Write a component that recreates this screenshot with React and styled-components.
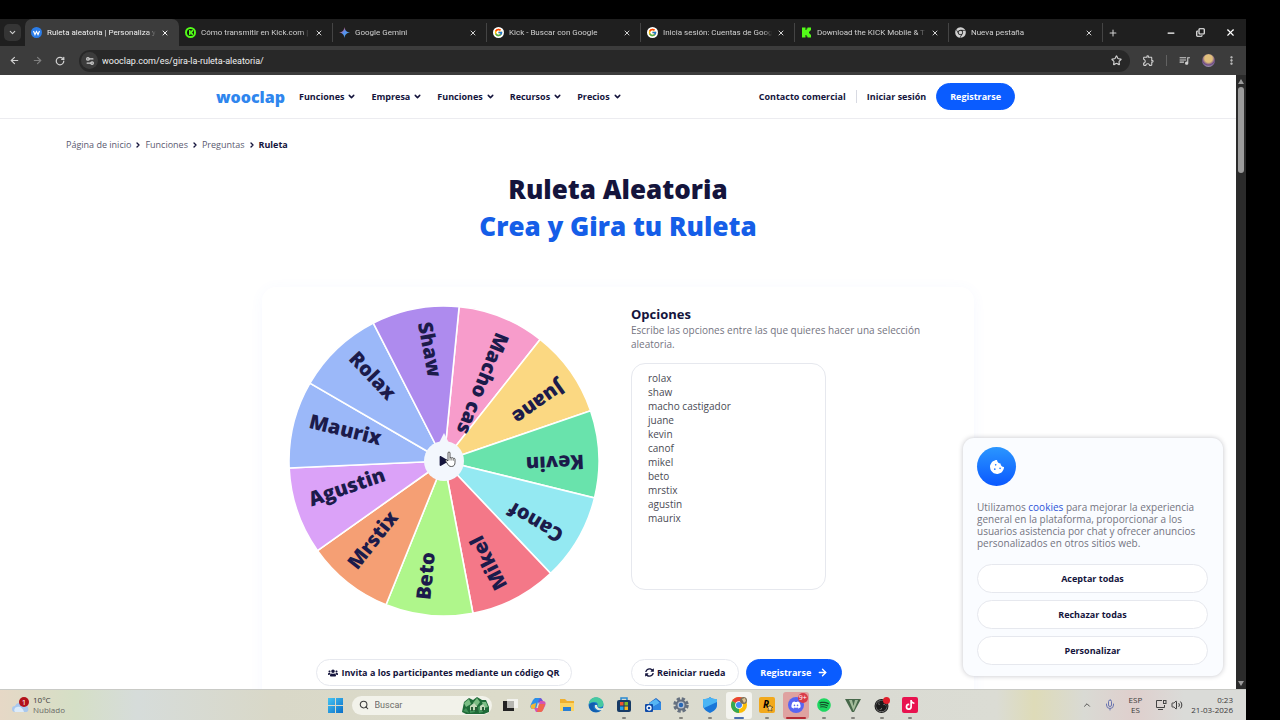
import React, { useState } from "react";
import styled, { createGlobalStyle, css } from "styled-components";
import {
  ArrowLeft,
  ArrowRight,
  ChevronDown,
  ChevronRight,
  ChevronUp,
  Copy,
  EllipsisVertical,
  Mic,
  Minus,
  Plus,
  RotateCw,
  Search,
  Settings2,
  Star,
  Volume2,
  X
} from "lucide-react";
import {
  FaChrome,
  FaCookieBite,
  FaDiscord,
  FaPlay,
  FaSpotify,
  FaSyncAlt,
  FaTiktok,
  FaUsers
} from "react-icons/fa";
import { FcGoogle } from "react-icons/fc";
import { MdOutlineExtension, MdQueueMusic } from "react-icons/md";
import { SiObsstudio } from "react-icons/si";

const NAVY = "#14143c";
const BLUE = "#0a5cff";
const LINE = "#e6e8ee";

const GlobalStyle = createGlobalStyle`
  * {
    box-sizing: border-box;
  }
  body {
    margin: 0;
    background: #000;
    font-family: "Open Sans", "Noto Sans", sans-serif;
  }
  button, input, textarea {
    font-family: inherit;
    margin: 0;
  }
  button {
    padding: 0;
    border: none;
    background: none;
    color: inherit;
    cursor: pointer;
  }
  a {
    color: inherit;
    text-decoration: none;
  }
  svg {
    display: block;
    flex-shrink: 0;
  }
`;

const Desktop = styled.div`
  height: 100vh;
  padding: 19px 34px 0 0;
  display: flex;
  flex-direction: column;
  background: #000;
`;

/* browser */

const TabStrip = styled.div`
  height: 27px;
  display: flex;
  align-items: center;
  background: #1f1f1f;
  color: #d0d0d0;
  font-family: Roboto, sans-serif;
`;

const TabSearch = styled.button`
  width: 17px;
  height: 17px;
  margin: 0 4px;
  display: grid;
  place-items: center;
  border-radius: 5px;
  background: #353535;
`;

const Tab = styled.div`
  flex: 0 1 154px;
  min-width: 0;
  height: 19px;
  padding: 0 9px 0 6px;
  display: flex;
  align-items: center;
  gap: 5px;
  border-right: 1px solid #444;

  ${props =>
    props.$active &&
    css`
      height: 27px;
      border-right-color: transparent;
      border-radius: 7px 7px 0 0;
      background: #3c3c3c;
      color: #f0f0f0;
    `}
`;

const TabTitle = styled.span`
  flex: 1;
  overflow: hidden;
  white-space: nowrap;
  font-size: 8px;
  line-height: 12px;
  mask-image: linear-gradient(90deg, #000 92%, transparent);
`;

const NewTab = styled.button`
  margin-left: 5px;
`;

const WindowControls = styled.div`
  margin-left: auto;
  padding-right: 10px;
  display: flex;
  gap: 20px;
  color: #fff;
`;

const Toolbar = styled.div`
  height: 29px;
  padding: 0 9px;
  display: flex;
  align-items: center;
  background: #3c3c3c;
  color: #d0d0d0;
  font-family: Roboto, sans-serif;
`;

const NavButtons = styled.div`
  width: 70px;
  display: flex;
  gap: 12px;
`;

const ToolButton = styled.button`
  opacity: ${props => (props.$dim ? 0.45 : 1)};
`;

const AddressBar = styled.div`
  flex: 1;
  height: 22px;
  padding: 0 8px 0 2px;
  display: flex;
  align-items: center;
  gap: 4px;
  border-radius: 11px;
  background: #282828;
`;

const SiteInfo = styled.button`
  width: 17px;
  height: 17px;
  display: grid;
  place-items: center;
  border-radius: 50%;
  background: #3c3c3c;
`;

const Address = styled.input`
  flex: 1;
  padding: 0;
  border: none;
  outline: none;
  background: none;
  color: #f0f0f0;
  font-size: 9px;
`;

const ToolbarActions = styled.div`
  padding-left: 12px;
  display: flex;
  align-items: center;
  gap: 11px;
`;

const ToolbarDivider = styled.span`
  width: 1px;
  height: 11px;
  background: #626262;
`;

const Avatar = styled.span`
  width: 13px;
  height: 13px;
  border-radius: 50%;
  background: radial-gradient(circle at 50% 35%, #e0bf7c 35%, #6d4a86 60%, #a9a2b8 80%);
`;

const Viewport = styled.div`
  flex: 1;
  min-height: 0;
  display: flex;
`;

const Scrollbar = styled.div`
  width: 10px;
  padding: 4px 0 3px;
  display: flex;
  flex-direction: column;
  align-items: center;
  gap: 3px;
  background: #2b2b2b;
`;

const Thumb = styled.div`
  width: 6px;
  height: 86px;
  margin-bottom: auto;
  border-radius: 3px;
  background: #9c9c9c;
`;

/* page */

const Page = styled.div`
  position: relative;
  flex: 1;
  min-width: 0;
  overflow: hidden;
  background: #fff;
  color: ${NAVY};
`;

const Header = styled.header`
  height: 44px;
  border-bottom: 1px solid #ececf0;
`;

const HeaderInner = styled.div`
  max-width: 804px;
  height: 100%;
  margin: 0 auto;
  padding-right: 5px;
  display: flex;
  align-items: center;
  font-size: 9px;
  font-weight: 700;
`;

const Logo = styled.a`
  width: 83px;
  color: #2f86ee;
  font-size: 16px;
  line-height: 20px;
  font-weight: 800;
`;

const Menu = styled.nav`
  display: flex;
  gap: 15px;
`;

const MenuButton = styled.button`
  display: flex;
  align-items: center;
  gap: 3px;
  font-size: 9px;
  font-weight: 700;
`;

const Account = styled.div`
  margin-left: auto;
  display: flex;
  align-items: center;
`;

const AccountLink = styled.a`
  padding: 0 10px;

  & + & {
    border-left: 1px solid #d8dae2;
  }
`;

const Pill = styled.button`
  height: 27px;
  padding: 0 ${props => (props.$tight ? 11 : 13)}px;
  display: flex;
  align-items: center;
  justify-content: center;
  gap: ${props => (props.$primary ? 6 : 3)}px;
  border: 1px solid ${props => (props.$primary ? BLUE : LINE)};
  border-radius: 14px;
  background: ${props => (props.$primary ? BLUE : "#fff")};
  color: ${props => (props.$primary ? "#fff" : NAVY)};
  font-size: 9px;
  font-weight: 700;
  white-space: nowrap;
`;

const Breadcrumb = styled.nav`
  max-width: 1104px;
  margin: 0 auto;
  padding-top: 18px;
  display: flex;
  align-items: center;
  gap: 3px;
  color: #5a5a70;
  font-size: 9px;
  line-height: 16px;
`;

const Current = styled.span`
  color: ${NAVY};
  font-weight: 700;
`;

const Title = styled.h1`
  margin: 18px 0 0;
  font-size: 26px;
  line-height: 37px;
  font-weight: 800;
  text-align: center;

  span {
    display: block;
    color: #155ee8;
  }
`;

const Card = styled.main`
  max-width: 712px;
  margin: 42px auto 0;
  padding: 19px 27px 40px;
  display: grid;
  grid-template-columns: 310px 1fr;
  gap: 43px 32px;
  border-radius: 14px;
  background: #fff;
  box-shadow: 0 2px 14px rgba(70, 110, 255, 0.05);
`;

const WheelBox = styled.div`
  position: relative;
`;

const SpinButton = styled.button`
  position: absolute;
  top: 50%;
  left: 50%;
  width: 40px;
  height: 40px;
  display: grid;
  place-items: center;
  border-radius: 50%;
  background: #f3f7fd;
  transform: translate(-50%, -50%);

  &::before {
    content: "";
    position: absolute;
    bottom: 38px;
    border: 5px solid transparent;
    border-top: none;
    border-bottom: 10px solid #f3f7fd;
  }
`;

const Cursor = styled.svg`
  position: absolute;
  left: 156px;
  top: 145px;
  pointer-events: none;
`;

const Options = styled.section`
  display: flex;
  flex-direction: column;
  align-items: flex-start;
`;

const OptionsLabel = styled.label`
  font-size: 13px;
  line-height: 17px;
  font-weight: 700;
`;

const Hint = styled.p`
  margin: 0 0 12px;
  color: #74747f;
  font-size: 10px;
  line-height: 14px;
`;

const OptionsInput = styled.textarea`
  width: 195px;
  height: 227px;
  padding: 7px 16px;
  border: 1px solid ${LINE};
  border-radius: 14px;
  outline: none;
  resize: none;
  color: #4a4a54;
  font-size: 10px;
  line-height: 14px;
`;

const Actions = styled.div`
  display: flex;
  justify-content: ${props => (props.$center ? "center" : "flex-start")};
  gap: 7px;
`;

const CookiePanel = styled.aside`
  position: absolute;
  right: 13px;
  bottom: 13px;
  width: 260px;
  padding: 9px 15px 11px 14px;
  border-radius: 11px;
  background: #fafcff;
  box-shadow: 0 0 5px rgba(20, 20, 40, 0.25);
`;

const CookieBadge = styled.div`
  width: 39px;
  height: 39px;
  display: grid;
  place-items: center;
  border-radius: 50%;
  background: linear-gradient(#2a96ff, #0a58ff);
  color: #fff;
`;

const CookieText = styled.p`
  margin: 15px 0;
  color: #74747f;
  font-size: 10px;
  line-height: 12px;

  a {
    color: #2d52d8;
  }
`;

const CookieActions = styled.div`
  display: grid;
  gap: 7px;

  ${Pill} {
    height: 29px;
    border-radius: 15px;
  }
`;

/* taskbar */

const Taskbar = styled.footer`
  height: 31px;
  padding: 0 13px 0 12px;
  display: grid;
  grid-template-columns: 1fr auto 1fr;
  align-items: center;
  border-top: 1px solid #c9cac6;
  background: linear-gradient(
    90deg,
    #e6d8c6 0,
    #d5dfc6 6%,
    #d6dcda 11%,
    #d9d8c8 22%,
    #dcdbca 40%,
    #dadbd3 70%,
    #dbdcd4 80%,
    #dedbb8 83%,
    #d9dad4 87%,
    #dfcfcd 91%,
    #dadbd8 95%
  );
  color: #3a3a3a;
  font-size: 8px;
  line-height: 10px;
`;

const Weather = styled.button`
  display: flex;
  align-items: center;
  gap: 4px;
  text-align: left;
  font-size: 8px;
  line-height: 10px;

  small {
    display: block;
    font-size: 8px;
    color: #6a6a66;
  }
`;

const Dock = styled.div`
  display: flex;
  align-items: center;
`;

const StartButton = styled.button`
  width: 30px;
  display: grid;
  place-items: center;
`;

const SearchBox = styled.label`
  width: 140px;
  height: 19px;
  margin: 0 4px 0 1px;
  padding: 0 2px 0 7px;
  display: flex;
  align-items: center;
  gap: 6px;
  border-radius: 10px;
  background: #f2f2ea;

  input {
    flex: 1;
    min-width: 0;
    padding: 0;
    border: none;
    outline: none;
    background: none;
    font-family: Roboto, sans-serif;
    font-size: 9px;
  }

  input::placeholder {
    color: #6c6c68;
  }
`;

const AppList = styled.div`
  width: 429px;
  display: grid;
  grid-template-columns: repeat(15, 1fr);
  justify-items: center;
`;

const AppButton = styled.button`
  position: relative;
  width: 26px;
  height: 27px;
  display: grid;
  place-items: center;
  border-radius: 3px;
  background: ${props => props.$bg || "transparent"};

  &::after {
    content: "";
    position: absolute;
    bottom: 0;
    left: 50%;
    width: ${props => props.$bar || 0}px;
    height: 2px;
    border-radius: 1px;
    background: ${props => props.$barColor || "#85857f"};
    transform: translateX(-50%);
  }
`;

const AppBadge = styled.span`
  position: absolute;
  top: 1px;
  right: 1px;
  min-width: 10px;
  height: 10px;
  border-radius: 5px;
  background: ${props => props.$color};
  color: #fff;
  font-size: 7px;
  line-height: 10px;
`;

const Tray = styled.div`
  display: flex;
  align-items: center;
  justify-content: flex-end;
`;

const TrayIcons = styled.div`
  display: flex;
  align-items: center;
  gap: ${props => props.$gap}px;
`;

const Language = styled.div`
  margin: 0 13px;
  text-align: center;
`;

const Clock = styled.div`
  margin-left: 8px;
  text-align: right;
`;

const tabs = [
  { title: "Ruleta aleatoria | Personaliza y", icon: "wooclap" },
  { title: "Cómo transmitir en Kick.com |", icon: "kickRound" },
  { title: "Google Gemini", icon: "gemini" },
  { title: "Kick - Buscar con Google", icon: "google" },
  { title: "Inicia sesión: Cuentas de Goog", icon: "google" },
  { title: "Download the KICK Mobile & T", icon: "kick" },
  { title: "Nueva pestaña", icon: "chrome" }
];

const menu = ["Funciones", "Empresa", "Funciones", "Recursos", "Precios"];

const slices = [
  { label: "Macho cas", color: "#f79ccb" },
  { label: "Juane", color: "#fbd882" },
  { label: "Kevin", color: "#69e3ac" },
  { label: "Canof", color: "#94e9f2" },
  { label: "Mikel", color: "#f47888" },
  { label: "Beto", color: "#aff68b" },
  { label: "Mrstix", color: "#f59f74" },
  { label: "Agustin", color: "#dba2f8" },
  { label: "Maurix", color: "#9bb8f9" },
  { label: "Rolax", color: "#9bb8f9" },
  { label: "Shaw", color: "#ae8bee" }
];

const RADIUS = 155;
const STEP = 360 / slices.length;
const START = 5.6;

// clockwise from twelve o'clock
const pointAt = (angle, r) => {
  const rad = (angle * Math.PI) / 180;
  return `${Math.sin(rad) * r} ${-Math.cos(rad) * r}`;
};

const Wheel = () => (
  <svg width="310" height="310" viewBox="-155 -155 310 310">
    {slices.map(({ label, color }, i) => {
      const from = START + i * STEP;
      return (
        <path
          key={label}
          d={`M0 0L${pointAt(from, RADIUS)}A${RADIUS} ${RADIUS} 0 0 1 ${pointAt(from + STEP, RADIUS)}Z`}
          fill={color}
          stroke="#fff"
          strokeWidth="1.6"
        />
      );
    })}
    {slices.map(({ label }, i) => (
      <text
        key={label}
        x="-140"
        y="0"
        transform={`rotate(${START + (i + 0.5) * STEP + 90})`}
        fill="#1c1b4b"
        fontSize="20"
        fontWeight="800"
      >
        {label}
      </text>
    ))}
  </svg>
);

const HandCursor = () => (
  <Cursor width="11" height="17" viewBox="0 0 11 17">
    <path
      d="M3 10V2a1 1 0 012 0v5q.9-1 1.800 0 .9-.8 1.600.3 1.600-.4 1.600 1v3c0 2.600-1 4.200-3.600 4.200-2.200 0-3-1-3.800-2.500L.8 10.200c-.4-1 .5-1.600 1.200-1z"
      fill="#fff"
      stroke="#333"
      strokeWidth="0.8"
    />
    <path d="M5 7v2.500M6.800 7.300v2.200M8.400 7.700v2" stroke="#333" strokeWidth="0.6" />
  </Cursor>
);

const TabIcon = ({ name }) => {
  if (name === "google") {
    return (
      <svg width="11" height="11" viewBox="0 0 22 22">
        <circle cx="11" cy="11" r="11" fill="#fff" />
        <FcGoogle x="2" y="2" size={18} />
      </svg>
    );
  }
  if (name === "chrome") return <FaChrome size={11} />;

  return (
    <svg width="11" height="11" viewBox="0 0 22 22">
      {name === "wooclap" && (
        <>
          <circle cx="11" cy="11" r="11" fill="#2b7de9" />
          <path d="M5 8l3 7 3-6 3 6 3-7" fill="none" stroke="#fff" strokeWidth="2.400" />
        </>
      )}
      {name === "kickRound" && (
        <>
          <circle cx="11" cy="11" r="9" fill="#111" stroke="#53fc18" strokeWidth="4" />
          <path d="M8 6h3v3l3-3h2v3l-2 2 2 2v3h-2l-3-3v3H8z" fill="#53fc18" />
        </>
      )}
      {name === "gemini" && (
        <>
          <defs>
            <linearGradient id="gemini" x1="0" y1="0" x2="1" y2="1">
              <stop offset="0.200" stopColor="#ef5350" />
              <stop offset="0.450" stopColor="#5b8def" />
              <stop offset="0.800" stopColor="#4aa6e8" />
            </linearGradient>
          </defs>
          <path d="M11 0c1 7 4 10 11 11-7 1-10 4-11 11-1-7-4-10-11-11 7-1 10-4 11-11z" fill="url(#gemini)" />
        </>
      )}
      {name === "kick" && (
        <path d="M2 1h7v5h2V3h2V1h7v6h-2v2h-2v4h2v2h2v6h-7v-2h-2v-3H9v5H2z" fill="#53fc18" />
      )}
    </svg>
  );
};

const WindowsLogo = () => (
  <svg width="15" height="15" viewBox="0 0 15 15">
    <defs>
      <linearGradient id="win" x1="0" y1="0" x2="1" y2="1">
        <stop offset="0" stopColor="#45c4f2" />
        <stop offset="1" stopColor="#0a6fc8" />
      </linearGradient>
    </defs>
    <path d="M0 0h7v7H0zM8 0h7v7H8zM0 8h7v7H0zM8 8h7v7H8z" fill="url(#win)" />
  </svg>
);

const Emeralds = () => (
  <svg width="29" height="17" viewBox="0 0 29 17">
    <path d="M1 15L3 5l5-4 4 2 4-3 5 3 4 0 3 7 0 5-5 2H5z" fill="#1f6b38" />
    <path d="M3 6l5-4 2 5-5 3zM12 6l4-5 3 4-3 4zM21 5l4 0 2 5-4 1z" fill="#7bbd84" />
    <path d="M2 14l3-3 3 5zM9 10l3-2 2 7-5 1zM17 10l4-2 1 7-4 1z" fill="#43925a" />
    <path d="M9 9l4-3 3 3v4H9zM19 9l3-2 2 3v3h-5z" fill="#c3d9ba" />
    <path d="M10 10h2v4h-2zM14 10h2v4h-2zM21 10h2v4h-2z" fill="#275c36" />
  </svg>
);

const Cloud = () => (
  <svg width="17" height="19" viewBox="0 0 17 19">
    <path d="M3 16a3 3 0 010-6 5 5 0 019-1 4 4 0 013 7z" fill="#a9c8ee" />
    <path d="M3 16a3 3 0 012-5c3-1 6 1 7 5z" fill="#dcebfa" />
    <circle cx="12" cy="6" r="5" fill="#b3121b" />
    <text x="12" y="9" fill="#fff" fontSize="8" textAnchor="middle">
      1
    </text>
  </svg>
);

const Glyph = ({ children }) => (
  <svg width="16" height="16" viewBox="0 0 16 16">
    {children}
  </svg>
);

const apps = [
  {
    name: "Vista de tareas",
    icon: (
      <Glyph>
        <path d="M5 2h11v9H5z" fill="#f2f2ee" />
        <path d="M1 4h4v7h7v3H1z" fill="#222" />
        <path d="M5 4h7v7H5z" fill="#b5b5b0" />
      </Glyph>
    )
  },
  {
    name: "Copilot",
    icon: (
      <Glyph>
        <path d="M5 1h5l2 4H8L6 12H3C0 12 0 9 1 7l2-4z" fill="#2b8fe8" />
        <path d="M3 7l3-1-1 6H3C0 12 1 9 1 8z" fill="#f2b534" />
        <path d="M11 15H6l-2-4h4l2-7h3c3 0 3 3 2 5l-2 4z" fill="#d453b5" />
        <path d="M8 11l1-4h6l-2 6c-1 2-2 2-3 2H7z" fill="#f0664e" />
        <path d="M10 1c2 0 2 2 3 3h-3L9 7l-1-2z" fill="#6b52d8" />
      </Glyph>
    )
  },
  {
    name: "Explorador de archivos",
    icon: (
      <Glyph>
        <path d="M1 2h5l2 2h7v10H1z" fill="#f0b02e" />
        <path d="M1 6h14v8H1z" fill="#fcd462" />
        <path d="M4 10h8v4H4z" fill="#2a7fd4" />
      </Glyph>
    )
  },
  {
    name: "Edge",
    icon: (
      <Glyph>
        <circle cx="8" cy="8" r="7.500" fill="#1979c8" />
        <path d="M1 7c0-9 14-9 14.500 0 0 4-5 4-6 2 2-5-6-5-8.500-2z" fill="#46c9a0" />
        <path d="M6 8c-2 4 2 7 7 5-4 4-11 2-12-4 1-4 6-4 8-1-1-1-2-1-3 0z" fill="#125cae" />
        <path d="M9 8c0 3 3 4 6 3v2C10 14 6 12 7 8z" fill="#e5ecdf" />
      </Glyph>
    )
  },
  {
    name: "Microsoft Store",
    bar: 4,
    icon: (
      <Glyph>
        <path d="M5 4V1h6v3" fill="none" stroke="#2a8bd2" strokeWidth="1.500" />
        <rect x="1" y="3" width="14" height="12" rx="2" fill="#173b66" />
        <path d="M4 5h3.500v3.500H4z" fill="#ee5532" />
        <path d="M8.500 5H12v3.500H8.500z" fill="#7fba2a" />
        <path d="M4 9.500h3.500V13H4z" fill="#27a5ea" />
        <path d="M8.500 9.500H12V13H8.500z" fill="#f8b81e" />
      </Glyph>
    )
  },
  {
    name: "Outlook",
    icon: (
      <Glyph>
        <path d="M4 6l7-5 5 4v8H6z" fill="#1a62c4" />
        <path d="M4 6l7-4 4 4-7 4z" fill="#55b5f4" />
        <path d="M6 11l10-6v8H6z" fill="#2f87e2" />
        <rect x="0" y="7" width="8" height="8" rx="1" fill="#0f4ba8" />
        <circle cx="4" cy="11" r="2" fill="none" stroke="#fff" strokeWidth="1.300" />
      </Glyph>
    )
  },
  {
    name: "Configuración",
    bar: 4,
    icon: (
      <Glyph>
        <circle cx="8" cy="8" r="6" fill="none" stroke="#65707f" strokeWidth="3.500" strokeDasharray="3 1.712" />
        <circle cx="8" cy="8" r="4.500" fill="#b6c1d0" stroke="#65707f" strokeWidth="2" />
        <circle cx="8" cy="8" r="2.200" fill="#2666b4" />
      </Glyph>
    )
  },
  {
    name: "Seguridad de Windows",
    bar: 4,
    icon: (
      <Glyph>
        <path d="M8 0c2 2 4 2 7 2v6c0 4-3 6-7 8-4-2-7-4-7-8V2c3 0 5 0 7-2z" fill="#1976d8" />
        <path d="M8 0c2 2 4 2 7 2v3L2 11C1 9 1 8 1 2c3 0 5 0 7-2z" fill="#4ab5f5" />
      </Glyph>
    )
  },
  {
    name: "Chrome",
    bar: 10,
    barColor: "#4a6fae",
    bg: "#f4f4ef",
    icon: (
      <Glyph>
        <circle cx="8" cy="8" r="8" fill="#fbbc05" />
        <path d="M8 8L1.100 4A8 8 0 0114.900 4z" fill="#ea4335" />
        <path d="M8 8L1.100 4A8 8 0 008 16z" fill="#34a853" />
        <circle cx="8" cy="8" r="3.800" fill="#fff" />
        <circle cx="8" cy="8" r="3" fill="#4285f4" />
        <circle cx="12.500" cy="3.500" r="3.500" fill="#7c7058" />
        <path d="M11 2l3-1 1 3-2 2z" fill="#dcc392" />
      </Glyph>
    )
  },
  {
    name: "Rockstar Games",
    bar: 4,
    icon: (
      <Glyph>
        <rect width="16" height="16" rx="2" fill="#f2a91c" />
        <text x="4" y="11" fontSize="10" fontWeight="700" fontStyle="italic">
          R
        </text>
        <path
          d="M11 8l1 2h2l-1.500 1.500.5 2.500-2-1-2 1 .5-2.500L8 10h2z"
          fill="#f6d58c"
          stroke="#222"
          strokeWidth="0.500"
        />
      </Glyph>
    )
  },
  {
    name: "Discord",
    bar: 20,
    barColor: "#b52a34",
    bg: "#dfa2a0",
    badge: "9+",
    icon: (
      <Glyph>
        <circle cx="8" cy="8" r="8" fill="#5865f2" />
        <FaDiscord x="3" y="3" size={10} color="#fff" />
      </Glyph>
    )
  },
  {
    name: "Spotify",
    bar: 4,
    icon: (
      <Glyph>
        <circle cx="8" cy="8" r="6" fill="#14532b" />
        <FaSpotify x="1" y="1" size={14} color="#1ed760" />
      </Glyph>
    )
  },
  {
    name: "GTA V",
    bar: 4,
    icon: (
      <Glyph>
        <path d="M0 2h16L9 15H7z" fill="#47684a" />
        <path d="M4 3h3l1.500 6L10 3h3L8.500 14z" fill="#a3bb9a" />
      </Glyph>
    )
  },
  {
    name: "OBS Studio",
    bar: 4,
    icon: (
      <Glyph>
        <circle cx="7.500" cy="9" r="7" fill="#1b1b1b" />
        <SiObsstudio x="1.500" y="3" size={12} color="#8e8e8e" />
        <circle cx="7.500" cy="9" r="2" fill="#1b1b1b" />
        <circle cx="12.500" cy="3.500" r="3.500" fill="#e01e2b" />
      </Glyph>
    )
  },
  {
    name: "TikTok",
    bar: 4,
    icon: (
      <Glyph>
        <rect width="16" height="16" rx="2" fill="#e8134f" />
        <FaTiktok x="3" y="3" size={10} color="#fff" />
      </Glyph>
    )
  }
];

const App = () => {
  const [options, setOptions] = useState(
    "rolax\nshaw\nmacho castigador\njuane\nkevin\ncanof\nmikel\nbeto\nmrstix\nagustin\nmaurix"
  );
  const [address, setAddress] = useState("wooclap.com/es/gira-la-ruleta-aleatoria/");

  return (
    <Desktop>
      <GlobalStyle />

      <TabStrip>
        <TabSearch aria-label="Buscar pestañas">
          <ChevronDown size={9} strokeWidth={3} />
        </TabSearch>
        {tabs.map(({ title, icon }, i) => (
          <Tab key={title} $active={i === 0}>
            <TabIcon name={icon} />
            <TabTitle>{title}</TabTitle>
            <button aria-label="Cerrar pestaña">
              <X size={8} strokeWidth={3} />
            </button>
          </Tab>
        ))}
        <NewTab aria-label="Nueva pestaña">
          <Plus size={10} strokeWidth={2.5} />
        </NewTab>
        <WindowControls>
          <button aria-label="Minimizar">
            <Minus size={10} strokeWidth={3} />
          </button>
          <button aria-label="Restaurar">
            <Copy size={9} strokeWidth={3} style={{ transform: "scaleY(-1)" }} />
          </button>
          <button aria-label="Cerrar">
            <X size={11} strokeWidth={2.5} />
          </button>
        </WindowControls>
      </TabStrip>

      <Toolbar>
        <NavButtons>
          <ToolButton aria-label="Atrás">
            <ArrowLeft size={11} strokeWidth={2.5} />
          </ToolButton>
          <ToolButton aria-label="Adelante" $dim>
            <ArrowRight size={11} strokeWidth={2.5} />
          </ToolButton>
          <ToolButton aria-label="Recargar">
            <RotateCw size={10} strokeWidth={3} />
          </ToolButton>
        </NavButtons>
        <AddressBar>
          <SiteInfo aria-label="Información del sitio">
            <Settings2 size={10} strokeWidth={3} />
          </SiteInfo>
          <Address aria-label="Dirección" value={address} onChange={ev => setAddress(ev.target.value)} />
          <ToolButton aria-label="Favorito">
            <Star size={11} strokeWidth={2.5} />
          </ToolButton>
        </AddressBar>
        <ToolbarActions>
          <ToolButton aria-label="Extensiones">
            <MdOutlineExtension size={13} />
          </ToolButton>
          <ToolbarDivider />
          <ToolButton aria-label="Multimedia">
            <MdQueueMusic size={13} />
          </ToolButton>
          <Avatar />
          <ToolButton aria-label="Menú">
            <EllipsisVertical size={11} strokeWidth={3} />
          </ToolButton>
        </ToolbarActions>
      </Toolbar>

      <Viewport>
        <Page>
          <Header>
            <HeaderInner>
              <Logo href="#">wooclap</Logo>
              <Menu>
                {menu.map((item, i) => (
                  <MenuButton key={i}>
                    {item}
                    <ChevronDown size={9} strokeWidth={4} />
                  </MenuButton>
                ))}
              </Menu>
              <Account>
                <AccountLink href="#">Contacto comercial</AccountLink>
                <AccountLink href="#">Iniciar sesión</AccountLink>
                <Pill $primary>Registrarse</Pill>
              </Account>
            </HeaderInner>
          </Header>

          <Breadcrumb>
            <a href="#">Página de inicio</a>
            <ChevronRight size={8} strokeWidth={4} color={NAVY} />
            <a href="#">Funciones</a>
            <ChevronRight size={8} strokeWidth={4} color={NAVY} />
            <a href="#">Preguntas</a>
            <ChevronRight size={8} strokeWidth={4} color={NAVY} />
            <Current>Ruleta</Current>
          </Breadcrumb>

          <Title>
            Ruleta Aleatoria
            <span>Crea y Gira tu Ruleta</span>
          </Title>

          <Card>
            <WheelBox>
              <Wheel />
              <SpinButton aria-label="Girar">
                <FaPlay size={10} />
              </SpinButton>
              <HandCursor />
            </WheelBox>

            <Options>
              <OptionsLabel htmlFor="options">Opciones</OptionsLabel>
              <Hint>Escribe las opciones entre las que quieres hacer una selección aleatoria.</Hint>
              <OptionsInput id="options" value={options} onChange={ev => setOptions(ev.target.value)} />
            </Options>

            <Actions $center>
              <Pill $tight>
                <FaUsers size={10} />
                Invita a los participantes mediante un código QR
              </Pill>
            </Actions>
            <Actions>
              <Pill>
                <FaSyncAlt size={9} />
                Reiniciar rueda
              </Pill>
              <Pill $primary>
                Registrarse
                <ArrowRight size={11} strokeWidth={3} />
              </Pill>
            </Actions>
          </Card>

          <CookiePanel>
            <CookieBadge>
              <FaCookieBite size={14} />
            </CookieBadge>
            <CookieText>
              Utilizamos <a href="#">cookies</a> para mejorar la experiencia general en la plataforma,
              proporcionar a los usuarios asistencia por chat y ofrecer anuncios personalizados en otros
              sitios web.
            </CookieText>
            <CookieActions>
              <Pill>Aceptar todas</Pill>
              <Pill>Rechazar todas</Pill>
              <Pill>Personalizar</Pill>
            </CookieActions>
          </CookiePanel>
        </Page>

        <Scrollbar>
          <svg width="6" height="5" viewBox="0 0 6 5">
            <path d="M3 0l3 5H0z" fill="#9c9c9c" />
          </svg>
          <Thumb />
          <svg width="6" height="5" viewBox="0 0 6 5">
            <path d="M3 5L0 0h6z" fill="#9c9c9c" />
          </svg>
        </Scrollbar>
      </Viewport>

      <Taskbar>
        <Weather>
          <Cloud />
          <span>
            10°C
            <small>Nublado</small>
          </span>
        </Weather>

        <Dock>
          <StartButton aria-label="Inicio">
            <WindowsLogo />
          </StartButton>
          <SearchBox>
            <Search size={10} strokeWidth={2.5} />
            <input placeholder="Buscar" aria-label="Buscar" />
            <Emeralds />
          </SearchBox>
          <AppList>
            {apps.map(({ name, icon, bar, barColor, bg, badge }) => (
              <AppButton key={name} aria-label={name} $bar={bar} $barColor={barColor} $bg={bg}>
                {icon}
                {badge && <AppBadge $color="#d93a48">{badge}</AppBadge>}
              </AppButton>
            ))}
          </AppList>
        </Dock>

        <Tray>
          <TrayIcons $gap={12}>
            <ChevronUp size={10} />
            <Mic size={12} color="#6a74b0" />
          </TrayIcons>
          <Language>
            ESP
            <br />
            ES
          </Language>
          <TrayIcons $gap={4}>
            <svg width="12" height="12" viewBox="0 0 12 12" fill="none" stroke="#444">
              <path d="M7 1.500H1.500v7h8V6M3 10.500h5" />
              <rect x="8.500" y="1.500" width="2.500" height="3" />
            </svg>
            <Volume2 size={12} />
          </TrayIcons>
          <Clock>
            0:23
            <br />
            21-03-2026
          </Clock>
        </Tray>
      </Taskbar>
    </Desktop>
  );
};

export default App;
